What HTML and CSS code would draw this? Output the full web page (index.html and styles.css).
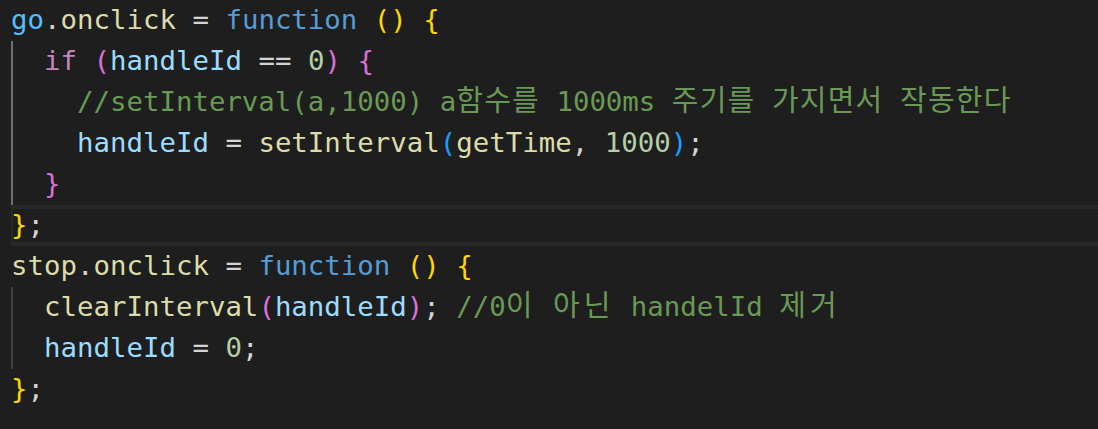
FILE: index.html
```html
<!DOCTYPE html>
<html lang="ko">
<head>
<meta charset="utf-8">
<title>code</title>
<link rel="stylesheet" href="styles.css">
</head>
<body>
<div class="editor">
  <div class="line"><span class="const">go</span><span class="p">.</span><span class="fn">onclick</span><span class="p"> = </span><span class="kw">function</span><span class="p"> </span><span class="b1">()</span><span class="p"> </span><span class="b1">{</span></div>
  <div class="block active">
    <div class="line"><span class="p">  </span><span class="ctl">if</span><span class="p"> </span><span class="b2">(</span><span class="var">handleId</span><span class="p"> == </span><span class="num">0</span><span class="b2">)</span><span class="p"> </span><span class="b2">{</span></div>
    <div class="line"><span class="p">    </span><span class="cmt">//setInterval(a,1000) a<span class="ko">함수를</span> 1000ms <span class="ko">주기를</span> <span class="ko">가지면서</span> <span class="ko">작동한다</span></span></div>
    <div class="line"><span class="p">    </span><span class="var">handleId</span><span class="p"> = </span><span class="fn">setInterval</span><span class="b3">(</span><span class="fn">getTime</span><span class="p">, </span><span class="num">1000</span><span class="b3">)</span><span class="p">;</span></div>
    <div class="line"><span class="p">  </span><span class="b2">}</span></div>
  </div>
  <div class="line current"><span class="b1">}</span><span class="p">;</span></div>
  <div class="line"><span class="fn">stop</span><span class="p">.</span><span class="fn">onclick</span><span class="p"> = </span><span class="kw">function</span><span class="p"> </span><span class="b1">()</span><span class="p"> </span><span class="b1">{</span></div>
  <div class="block">
    <div class="line"><span class="p">  </span><span class="fn">clearInterval</span><span class="b2">(</span><span class="var">handleId</span><span class="b2">)</span><span class="p">; </span><span class="cmt">//0<span class="ko wide">이</span> <span class="ko wide">아닌</span> handelId <span class="ko wide">제거</span></span></div>
    <div class="line"><span class="p">  </span><span class="var">handleId</span><span class="p"> = </span><span class="num">0</span><span class="p">;</span></div>
  </div>
  <div class="line"><span class="b1">}</span><span class="p">;</span></div>
</div>
</body>
</html>
```

FILE: styles.css
```css
html, body {
  margin: 0;
  padding: 0;
  background: #1e1e1e;
}

body {
  width: 1098px;
  height: 429px;
  overflow: hidden;
}

.editor {
  margin-left: 11px;
  font-family: "DejaVu Sans Mono", "Noto Sans CJK KR", monospace;
  font-size: 27.4px;
  color: #d4d4d4;
}

.line {
  height: 41px;
  line-height: 39px;
  white-space: pre;
}

.ko {
  font-family: "Noto Sans CJK KR", sans-serif;
  font-size: 29px;
  line-height: 1;
  letter-spacing: 1.2px;
}

.ko.wide {
  letter-spacing: 4px;
}

.block {
  background: linear-gradient(#404040, #404040) no-repeat 0 0 / 2px 100%;
}

.block.active {
  background-image: linear-gradient(#707070, #707070);
}

.current {
  box-shadow: inset 0 4px #282828, inset 0 -4px #282828, inset 2px 0 #282828;
}

.p { color: #d4d4d4; }
.const { color: #4fc1ff; }
.fn { color: #dcdcaa; }
.kw { color: #569cd6; }
.ctl { color: #c586c0; }
.var { color: #9cdcfe; }
.num { color: #b5cea8; }
.cmt { color: #6a9955; }
.b1 { color: #ffd700; }
.b2 { color: #da70d6; }
.b3 { color: #179fff; }
```
